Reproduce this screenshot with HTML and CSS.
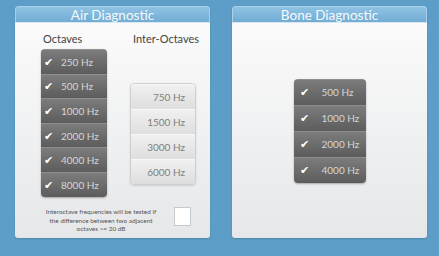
FILE: index.html
```html
<!DOCTYPE html>
<html lang="en">
<head>
    <meta charset="UTF-8">
    <title>Diagnostic</title>
    <link rel="stylesheet" href="styles.css">
</head>
<body>

<div class="screen">
    <div class="panel">
        <div class="panel-title">Air Diagnostic</div>
        <div class="panel-body air">
            <div class="col octaves">
                <div class="col-label">Octaves</div>
                <div class="btn-group dark">
                    <div class="btn"><span class="check">&#10004;</span>250 Hz</div>
                    <div class="btn"><span class="check">&#10004;</span>500 Hz</div>
                    <div class="btn"><span class="check">&#10004;</span>1000 Hz</div>
                    <div class="btn"><span class="check">&#10004;</span>2000 Hz</div>
                    <div class="btn"><span class="check">&#10004;</span>4000 Hz</div>
                    <div class="btn"><span class="check">&#10004;</span>8000 Hz</div>
                </div>
            </div>
            <div class="col inter">
                <div class="col-label">Inter-Octaves</div>
                <div class="btn-group light">
                    <div class="btn">750 Hz</div>
                    <div class="btn">1500 Hz</div>
                    <div class="btn">3000 Hz</div>
                    <div class="btn">6000 Hz</div>
                </div>
            </div>
            <div class="note-row">
                <p class="note">Interoctave frequencies will be tested if<br>the difference between two adjacent<br>octaves &gt;= 20 dB</p>
                <div class="checkbox"></div>
            </div>
        </div>
    </div>

    <div class="panel">
        <div class="panel-title">Bone Diagnostic</div>
        <div class="panel-body bone">
            <div class="btn-group dark wide">
                <div class="btn"><span class="check">&#10004;</span>500 Hz</div>
                <div class="btn"><span class="check">&#10004;</span>1000 Hz</div>
                <div class="btn"><span class="check">&#10004;</span>2000 Hz</div>
                <div class="btn"><span class="check">&#10004;</span>4000 Hz</div>
            </div>
        </div>
    </div>
</div>

</body>
</html>
```

FILE: styles.css
```css
body {
    margin: 0;
    background-color: #5d9ec8;
    font-family: Lato, "Open Sans", sans-serif;
}

.screen {
    display: flex;
    gap: 22px;
    padding: 6px 0 0 15px;
    height: 250px;
    box-sizing: border-box;
}

.panel {
    width: 195px;
    height: 232px;
    display: flex;
    flex-direction: column;
    border-radius: 3px;
    overflow: hidden;
    box-shadow: 0 1px 2px rgba(0, 0, 0, 0.15);
}

.panel-title {
    height: 17px;
    line-height: 16px;
    text-align: center;
    color: #f4f9fc;
    font-size: 13.5px;
    background: linear-gradient(#8fc3e3, #72acd4);
    border: 1px solid #a9d1ea;
    border-bottom: 1px solid #d7e8f3;
    border-radius: 3px 3px 0 0;
    box-sizing: border-box;
}

.panel-body {
    flex: 1;
    background: linear-gradient(#fbfbfb, #e5e7e9);
}

/* Air panel */
.air {
    display: grid;
    grid-template-columns: 66px 66px;
    column-gap: 23px;
    grid-template-rows: 174px auto;
    padding: 9px 0 0 26px;
}

.col-label {
    font-size: 11px;
    color: #444;
    height: 17px;
    white-space: nowrap;
}

.octaves .col-label {
    margin-left: 2px;
}

.inter .col-label {
    margin-left: 3px;
    margin-bottom: 34px;
}

.btn-group {
    border-radius: 4px;
    overflow: hidden;
}

.btn-group.dark {
    box-shadow: 0 1px 2px rgba(0, 0, 0, 0.3);
}

.dark .btn {
    height: 24.6px;
    display: flex;
    align-items: center;
    padding-left: 3px;
    font-size: 10px;
    color: #d6d6d6;
    background: linear-gradient(#7c7c7c, #5c5c5c);
    border-top: 1px solid #8e8e8e;
    box-sizing: border-box;
}

.check {
    color: #ffffff;
    font-size: 11px;
    width: 17px;
}

.wide {
    width: 72px;
}

.wide .btn {
    height: 26px;
    padding-left: 6px;
}

.wide .check {
    width: 22px;
}

.light {
    border: 1px solid #cfcfcf;
    box-shadow: 0 1px 2px rgba(0, 0, 0, 0.12);
}

.light .btn {
    height: 25px;
    line-height: 25px;
    text-align: right;
    padding-right: 10px;
    font-size: 10px;
    color: #808080;
    background: linear-gradient(#f0f0f0, #dedede);
    border-top: 1px solid #f8f8f8;
    box-sizing: border-box;
}

.note-row {
    grid-column: 1 / 3;
    display: flex;
    align-items: flex-start;
    gap: 14px;
    margin-left: 1px;
}

.note {
    margin: 0;
    width: 118px;
    font-size: 6.4px;
    line-height: 8.5px;
    text-align: center;
    color: #555;
    padding-top: 2px;
    white-space: nowrap;
}

.checkbox {
    width: 15px;
    height: 17px;
    margin-top: 1px;
    background: #ffffff;
    border: 1px solid #c2cad2;
}

/* Bone panel */
.bone {
    display: flex;
    align-items: center;
    justify-content: center;
}
```
